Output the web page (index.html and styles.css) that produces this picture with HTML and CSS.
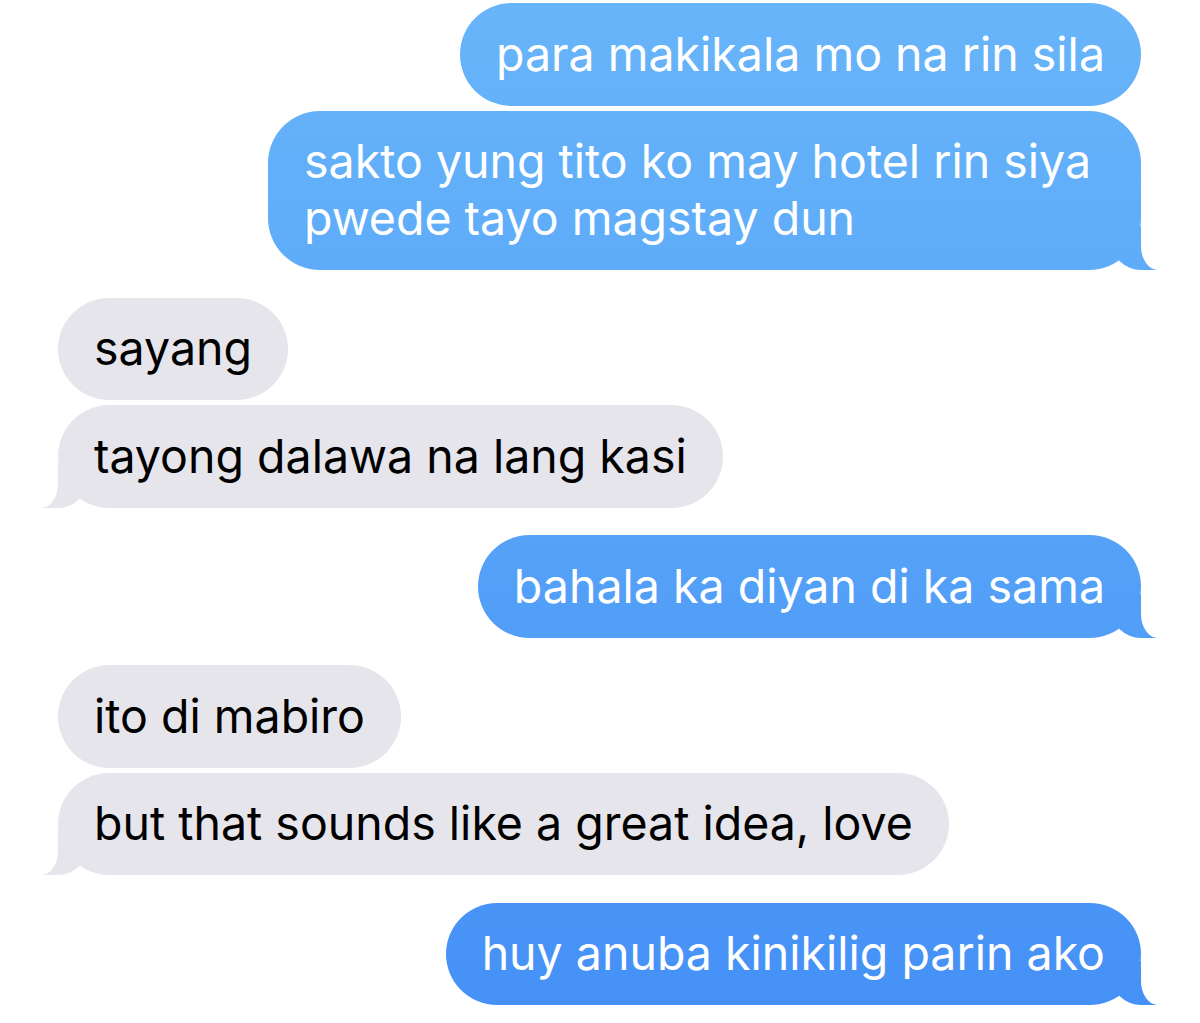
FILE: index.html
```html
<!DOCTYPE html>
<html lang="en">
<head>
    <meta charset="UTF-8">
    <meta name="viewport" content="width=device-width, initial-scale=1.0">
    <title>Messages</title>
    <link rel="stylesheet" href="styles.css">
</head>
<body>
    <div class="chat">
        <div class="group sent">
            <div class="bubble">para makikala mo na rin sila</div>
            <div class="bubble tail">sakto yung tito ko may hotel rin siya pwede tayo magstay dun</div>
        </div>

        <div class="group received">
            <div class="bubble">sayang</div>
            <div class="bubble tail">tayong dalawa na lang kasi</div>
        </div>

        <div class="group sent">
            <div class="bubble tail">bahala ka diyan di ka sama</div>
        </div>

        <div class="group received">
            <div class="bubble">ito di mabiro</div>
            <div class="bubble tail">but that sounds like a great idea, love</div>
        </div>

        <div class="group sent">
            <div class="bubble tail">huy anuba kinikilig parin ako</div>
        </div>
    </div>
</body>
</html>
```

FILE: styles.css
```css
* {
    margin: 0;
    padding: 0;
    box-sizing: border-box;
}

body {
    font-family: Inter, 'Noto Sans', sans-serif;
    background: #fff;
}

.chat {
    padding: 3px 59px 0 58px;
    display: flex;
    flex-direction: column;
    gap: 27.5px;
}

.group {
    display: flex;
    flex-direction: column;
    gap: 5px;
}

.sent {
    align-items: flex-end;
}

.received {
    align-items: flex-start;
}

.bubble {
    position: relative;
    max-width: 873px;
    padding: 22.75px 36px;
    border-radius: 52px;
    font-size: 46.5px;
    line-height: 57px;
}

.sent .bubble {
    color: #fff;
    background: linear-gradient(to bottom, #68b5fa 0, #4490f6 1023px) fixed;
}

.received .bubble {
    max-width: 920px;
    color: #000;
    background: #e6e5eb;
}

/* tail: a filled block with a rounded inner corner, cut by a white block */
.bubble.tail::before,
.bubble.tail::after {
    content: "";
    position: absolute;
    bottom: 0;
    height: 44px;
}

.sent .bubble.tail::before {
    right: -16px;
    width: 46px;
    background: linear-gradient(to bottom, #68b5fa 0, #4490f6 1023px) fixed;
    border-bottom-left-radius: 30px;
}

.sent .bubble.tail::after {
    right: -60px;
    width: 60px;
    background: #fff;
    border-bottom-left-radius: 17px 24px;
}

.received .bubble.tail::before {
    left: -16px;
    width: 46px;
    background: #e6e5eb;
    border-bottom-right-radius: 30px;
}

.received .bubble.tail::after {
    left: -60px;
    width: 60px;
    background: #fff;
    border-bottom-right-radius: 17px 24px;
}
```
